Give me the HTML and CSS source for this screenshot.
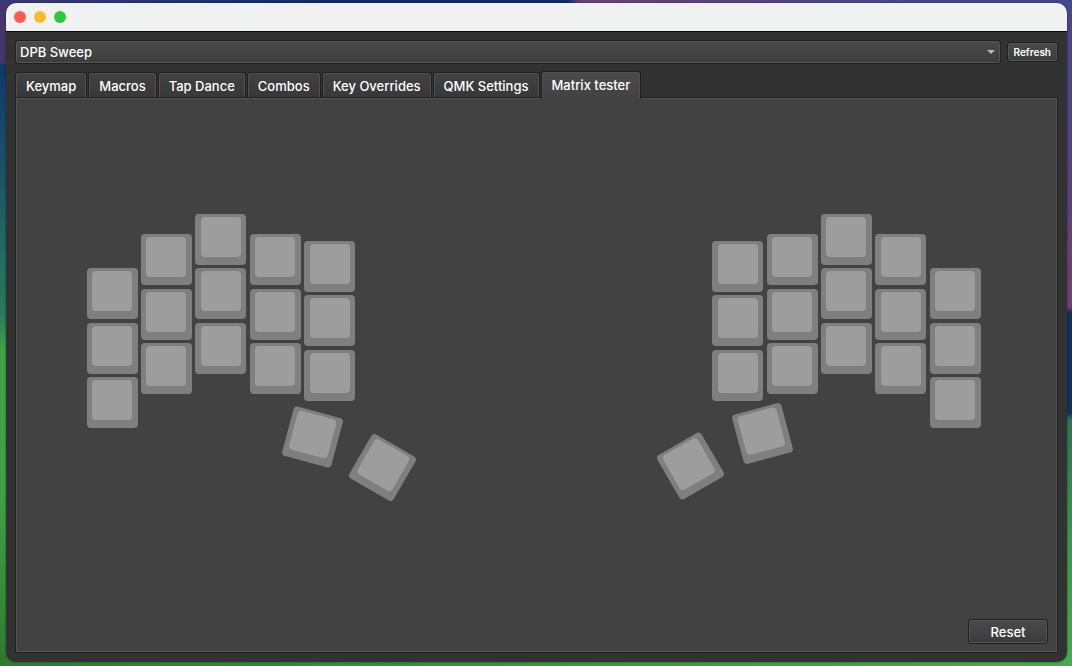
FILE: index.html
```html
<!DOCTYPE html>
<html lang="en">
<head>
<meta charset="utf-8">
<title>DPB Sweep</title>
<link rel="stylesheet" href="styles.css">
</head>
<body>
<div class="window">
  <header class="titlebar">
    <button class="light light-close" aria-label="Close"></button>
    <button class="light light-minimize" aria-label="Minimize"></button>
    <button class="light light-zoom" aria-label="Zoom"></button>
  </header>
  <main class="content">
    <div class="device-row">
      <div class="device">
        <select class="device-select" aria-label="Device"><option>DPB Sweep</option></select>
        <svg class="device-arrow" viewBox="0 0 8 4" aria-hidden="true"><path d="M0 0H8L4 4Z"/></svg>
      </div>
      <button class="button button-small">Refresh</button>
    </div>
    <div class="tabs" role="tablist">
      <button class="tab" role="tab">Keymap</button>
      <button class="tab" role="tab">Macros</button>
      <button class="tab" role="tab">Tap Dance</button>
      <button class="tab" role="tab">Combos</button>
      <button class="tab" role="tab">Key Overrides</button>
      <button class="tab" role="tab">QMK Settings</button>
      <button class="tab tab-active" role="tab" aria-selected="true">Matrix tester</button>
    </div>
    <section class="panel" role="tabpanel" aria-label="Matrix tester">
      <div class="board">
        <svg class="keyboard" viewBox="87 214 899 287" role="img" aria-label="Split keyboard layout">
          <defs>
            <g id="key"><rect class="key-base" width="51" height="51" rx="4"/><rect class="key-top" x="5" y="3" width="40" height="40" rx="4"/></g>
            <g id="key-r"><rect class="key-base" width="51" height="51" rx="4"/><rect class="key-top" x="6" y="3" width="40" height="40" rx="4"/></g>
            <g id="column"><use href="#key"/><use href="#key" y="55"/><use href="#key" y="109"/></g>
            <g id="column-r"><use href="#key-r"/><use href="#key-r" y="54"/><use href="#key-r" y="109"/></g>
          </defs>
          <use href="#column" x="87" y="268"/>
          <use href="#column" x="141" y="234"/>
          <use href="#column-r" x="195" y="214"/>
          <use href="#column" x="250" y="234"/>
          <use href="#column-r" x="304" y="241"/>
          <use href="#key" transform="translate(312.5 437) rotate(15) translate(-25.5 -25.5)"/>
          <use href="#key" transform="translate(382.5 467.5) rotate(30) translate(-25.5 -25.5)"/>
          <use href="#column-r" x="712" y="241"/>
          <use href="#column" x="767" y="234"/>
          <use href="#key" x="821" y="214"/>
          <use href="#key" x="821" y="268"/>
          <use href="#key" x="821" y="323"/>
          <use href="#key-r" x="875" y="234"/>
          <use href="#key-r" x="875" y="289"/>
          <use href="#key-r" x="875" y="343"/>
          <use href="#column" x="930" y="268"/>
          <use href="#key" transform="translate(762.5 433.5) rotate(-15) translate(-25.5 -25.5)"/>
          <use href="#key" transform="translate(690.5 466) rotate(-30) translate(-25.5 -25.5)"/>
        </svg>
      </div>
      <div class="actions"><button class="button button-reset">Reset</button></div>
    </section>
  </main>
</div>
</body>
</html>
```
FILE: styles.css
```css
* { box-sizing: border-box; }

body {
  margin: 0;
  min-height: 100vh;
  padding: 3px 5px 4px 6px;
  display: flex;
  font-family: Inter, "Liberation Sans", sans-serif;
  font-size: 13px;
  font-weight: 500;
  line-height: 16px;
  color: #fff;
  background:
    linear-gradient(90deg, #3a3a78, #102c6c 30% 53%, #6a4278 54%, #46478c 85%) top / 100% 4px no-repeat,
    linear-gradient(90deg, #2f7a30, #3a9440 50%, #44ac4a) bottom / 100% 10px no-repeat,
    linear-gradient(#44366a 63px, #10386a 64px, #1a5268 25%, #2b7a5a 47%, #40a444 53%, #40a044 75%, #2f7a30) left / 50% 100% no-repeat,
    linear-gradient(#46478c, #54427c 25%, #743f70 46%, #12305c 47% 62%, #2b7552 63%, #3a9450 80%, #44ac4a) right / 50% 100% no-repeat;
}

button, select { font: inherit; color: inherit; }

.window {
  flex: 1;
  display: flex;
  flex-direction: column;
  overflow: hidden;
  border-radius: 10px;
  background: #323232;
  box-shadow: 0 0 2px #0008;
}

.titlebar {
  display: flex;
  align-items: center;
  gap: 8px;
  height: 29px;
  padding: 0 8px;
  background: #f0f2f1;
  border-bottom: 1px solid #0c0c0c;
}

.light { width: 12px; height: 12px; padding: 0; border: 0; border-radius: 50%; }
.light-close { background: #ff5b54; }
.light-minimize { background: #fdb927; }
.light-zoom { background: #2ac940; }

.content {
  flex: 1;
  display: flex;
  flex-direction: column;
  padding: 8px 9px 9px;
}

.device-row { display: flex; align-items: center; gap: 6px; }
.device { position: relative; flex: 1; display: flex; }

.device-select {
  flex: 1;
  height: 24px;
  padding: 0 4px;
  appearance: none;
  border: 1px solid #202020;
  border-radius: 3px;
  background: linear-gradient(#4a4a4a, #3d3d3d);
  box-shadow: inset 0 0 0 1px #555;
}

.device-arrow {
  position: absolute;
  right: 6px;
  top: 10px;
  width: 8px;
  height: 4px;
  fill: #b8b8b8;
}

.button {
  border: 1px solid #202020;
  border-radius: 3px;
  background: linear-gradient(#4a4a4a, #3c3c3c);
  box-shadow: inset 0 0 0 1px #555;
}

.button-small { height: 20px; padding: 0 6px; font-size: 10px; line-height: 12px; font-weight: 600; }
.button-reset { width: 80px; height: 25px; }

.tabs { display: flex; align-items: flex-end; gap: 1px; margin-top: 7px; }

.tab {
  height: 25px;
  padding: 1px 10px 0;
  border: 1px solid #202020;
  border-bottom: 0;
  border-radius: 3px 3px 0 0;
  background: linear-gradient(#414141, #383838);
  box-shadow: inset 1px 1px #505050, inset -1px 0 #505050;
}

.tab-active {
  z-index: 1;
  height: 28px;
  margin-bottom: -2px;
  padding-bottom: 2px;
  background: linear-gradient(#4a4a4a, #424242);
}

.panel {
  flex: 1;
  display: flex;
  flex-direction: column;
  border: 1px solid #202020;
  background: #424242;
  box-shadow: inset 0 0 0 1px #555;
}

.board { flex: 1; display: flex; align-items: center; justify-content: center; }
.keyboard { width: 100%; max-width: 899px; }
.key-base { fill: #7f7f7f; }
.key-top { fill: #9d9d9d; }

.actions { display: flex; justify-content: flex-end; padding: 2px 9px 8px; }
```
